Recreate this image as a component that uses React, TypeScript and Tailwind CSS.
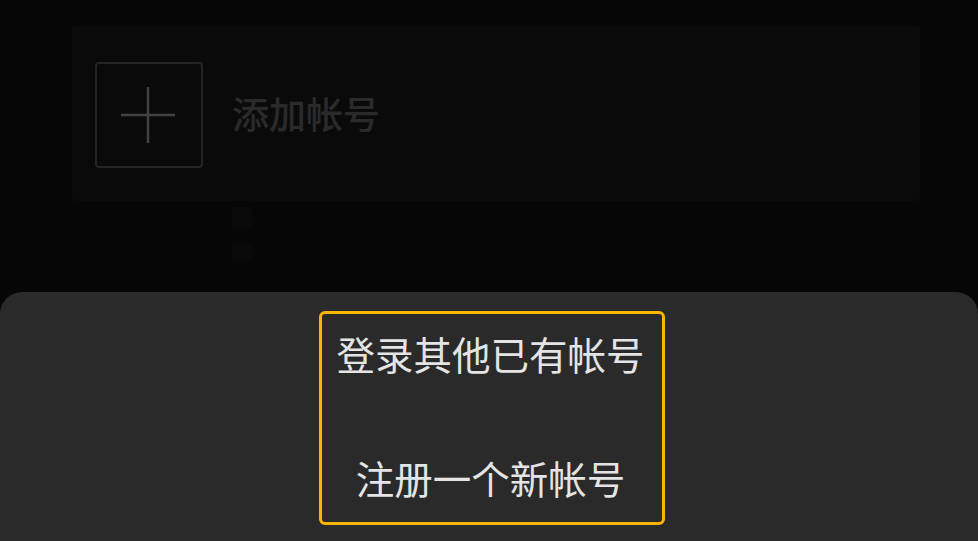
import React from "react";

export default function App() {
  const font = { fontFamily: '"Noto Sans CJK SC", "Noto Sans", sans-serif' };
  return (
    <div
      className="w-[978px] h-[541px] bg-[#060606] flex flex-col overflow-hidden"
      style={font}
    >
      <div className="h-[292px] shrink-0 pt-[26px] pl-[72px] pr-[58px]">
        <div className="h-[175px] bg-[#0a0a0a] rounded-[4px] pt-[36px] pl-[23px] flex items-start">
          <div className="w-[108px] h-[106px] border-[2px] border-[#242424] rounded-[4px] flex items-center justify-center">
            <svg width="56" height="56" viewBox="0 0 56 56">
              <path d="M27 0 V56 M0 28 H54" stroke="#424242" strokeWidth="2.5" fill="none" />
            </svg>
          </div>
          <div className="ml-[29px] mt-[33px] text-[37px] leading-none text-[#2a2a2a] font-medium">
            添加帐号
          </div>
        </div>
        <div className="ml-[160px] mt-[6px] flex flex-col gap-[14px]">
          <div className="w-[20px] h-[22px] bg-[#090909] rounded-[2px]" />
          <div className="w-[20px] h-[18px] bg-[#090909] rounded-[2px]" />
        </div>
      </div>
      <div className="flex-1 bg-[#2a2a2a] rounded-t-[22px] pt-[19px]">
        <div className="ml-[319px] w-[346px] h-[214px] border-[3px] border-[#f7b500] rounded-[6px] flex flex-col items-center pt-[20px] text-[38.5px] leading-none text-[#e4e4e4]">
          <div className="-ml-[3px]">登录其他已有帐号</div>
          <div className="mt-[85px] -ml-[3px]">注册一个新帐号</div>
        </div>
      </div>
    </div>
  );
}
